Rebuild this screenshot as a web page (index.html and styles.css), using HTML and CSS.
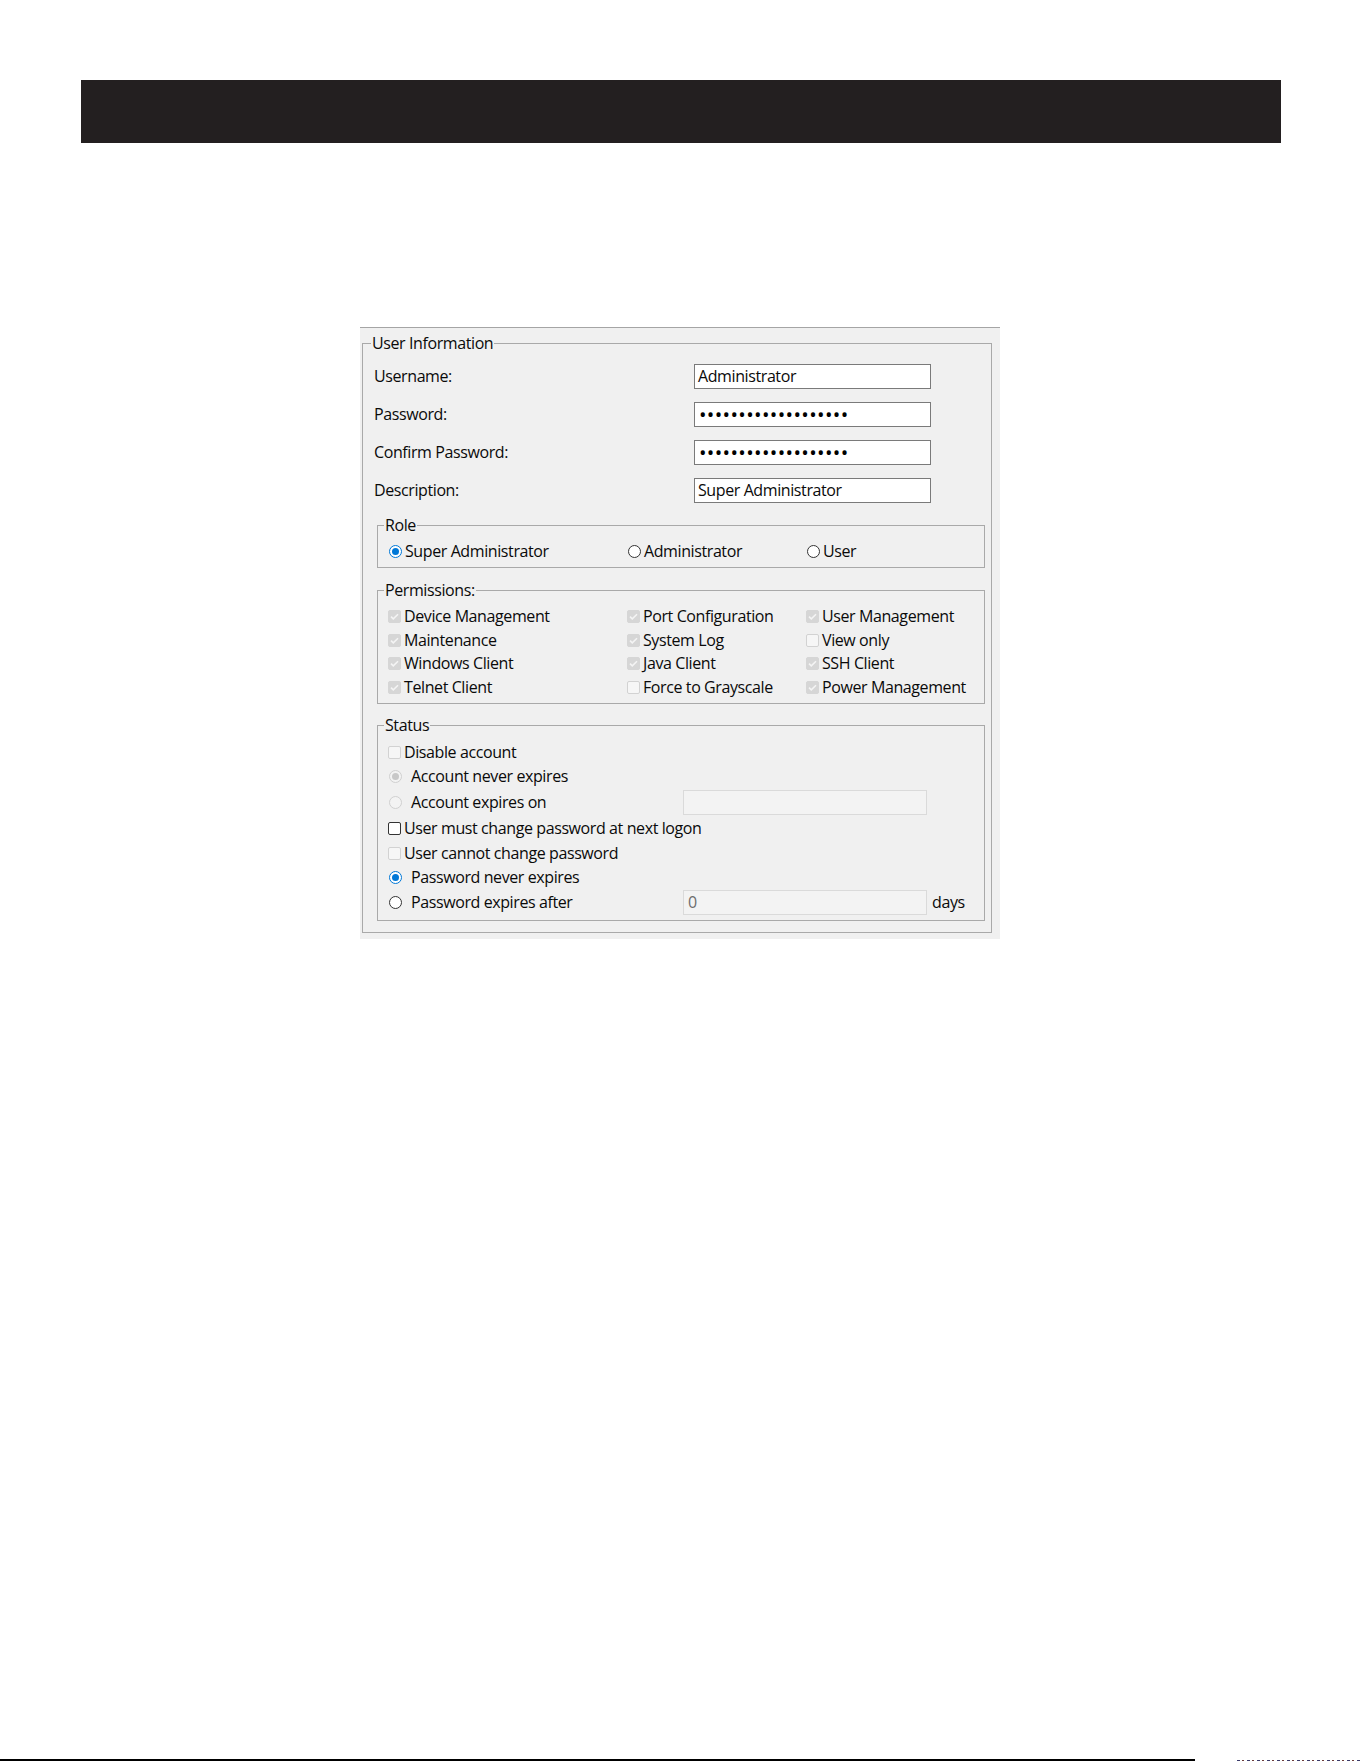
FILE: index.html
```html
<!DOCTYPE html>
<html>
<head>
  <title>User Information</title>
  <link rel="stylesheet" href="styles.css">
</head>
<body>
<div class="page">

  <div class="banner"></div>

  <div class="dialog">
    <fieldset class="group outer">
      <legend>User Information</legend>

      <div class="fields">
        <label>Username:</label>
        <div class="field">Administrator</div>
        <label>Password:</label>
        <div class="field dots">&bull;&bull;&bull;&bull;&bull;&bull;&bull;&bull;&bull;&bull;&bull;&bull;&bull;&bull;&bull;&bull;&bull;&bull;&bull;</div>
        <label>Confirm Password:</label>
        <div class="field dots">&bull;&bull;&bull;&bull;&bull;&bull;&bull;&bull;&bull;&bull;&bull;&bull;&bull;&bull;&bull;&bull;&bull;&bull;&bull;</div>
        <label>Description:</label>
        <div class="field">Super Administrator</div>
      </div>

      <fieldset class="group inner role">
        <legend>Role</legend>
        <div class="cols">
          <span class="opt"><span class="rb sel"></span>Super Administrator</span>
          <span class="opt"><span class="rb"></span>Administrator</span>
          <span class="opt"><span class="rb"></span>User</span>
        </div>
      </fieldset>

      <fieldset class="group inner perms">
        <legend>Permissions:</legend>
        <div class="cols">
          <span class="opt"><span class="cb done"><svg viewBox="0 0 11 11"><path d="M2 5.6l2.3 2.3L9 3.2"/></svg></span>Device Management</span>
          <span class="opt"><span class="cb done"><svg viewBox="0 0 11 11"><path d="M2 5.6l2.3 2.3L9 3.2"/></svg></span>Port Configuration</span>
          <span class="opt"><span class="cb done"><svg viewBox="0 0 11 11"><path d="M2 5.6l2.3 2.3L9 3.2"/></svg></span>User Management</span>
          <span class="opt"><span class="cb done"><svg viewBox="0 0 11 11"><path d="M2 5.6l2.3 2.3L9 3.2"/></svg></span>Maintenance</span>
          <span class="opt"><span class="cb done"><svg viewBox="0 0 11 11"><path d="M2 5.6l2.3 2.3L9 3.2"/></svg></span>System Log</span>
          <span class="opt"><span class="cb off"></span>View only</span>
          <span class="opt"><span class="cb done"><svg viewBox="0 0 11 11"><path d="M2 5.6l2.3 2.3L9 3.2"/></svg></span>Windows Client</span>
          <span class="opt"><span class="cb done"><svg viewBox="0 0 11 11"><path d="M2 5.6l2.3 2.3L9 3.2"/></svg></span>Java Client</span>
          <span class="opt"><span class="cb done"><svg viewBox="0 0 11 11"><path d="M2 5.6l2.3 2.3L9 3.2"/></svg></span>SSH Client</span>
          <span class="opt"><span class="cb done"><svg viewBox="0 0 11 11"><path d="M2 5.6l2.3 2.3L9 3.2"/></svg></span>Telnet Client</span>
          <span class="opt"><span class="cb off"></span>Force to Grayscale</span>
          <span class="opt"><span class="cb done"><svg viewBox="0 0 11 11"><path d="M2 5.6l2.3 2.3L9 3.2"/></svg></span>Power Management</span>
        </div>
      </fieldset>

      <fieldset class="group inner status">
        <legend>Status</legend>
        <div class="srow"><span class="opt"><span class="cb off"></span>Disable account</span></div>
        <div class="srow"><span class="opt"><span class="rb off sel wide"></span>Account never expires</span></div>
        <div class="srow input-row">
          <span class="opt lead"><span class="rb off wide"></span>Account expires on</span>
          <div class="field blank"></div>
        </div>
        <div class="srow mid"><span class="opt"><span class="cb"></span>User must change password at next logon</span></div>
        <div class="srow"><span class="opt"><span class="cb off"></span>User cannot change password</span></div>
        <div class="srow"><span class="opt"><span class="rb sel wide"></span>Password never expires</span></div>
        <div class="srow last">
          <span class="opt lead"><span class="rb wide"></span>Password expires after</span>
          <div class="field blank">0</div>
          <span class="unit">days</span>
        </div>
      </fieldset>
    </fieldset>
  </div>

  <div class="footer-rule"><span class="noise"></span></div>

</div>
</body>
</html>
```

FILE: styles.css
```css
* {
  box-sizing: border-box;
}
body {
  margin: 0;
  background: #fff;
  font-family: "Open Sans", "Noto Sans", sans-serif;
  font-size: 16px;
  letter-spacing: -0.4px;
  line-height: 21px;
  color: #0a0a0a;
}
.page {
  height: 1761px;
  display: flex;
  flex-direction: column;
  overflow: hidden;
}
.banner {
  height: 63px;
  margin: 80px 80px 0 81px;
  background: #231f20;
}

/* dialog */
.dialog {
  width: 640px;
  height: 612px;
  margin: 184px 0 0 360px;
  padding: 5px 8px 0 2px;
  background: #f0f0f0;
  border-top: 1px solid #a5a5a5;
}
.group {
  margin: 0;
  min-width: 0;
  border: 1px solid #a9a9a9;
}
.group legend {
  padding: 0 1px;
  margin-left: -4px;
}
.outer {
  padding: 10px 6px 11px 11px;
}
.outer > legend {
  margin-left: -3px;
}
.inner {
  margin: 12px 0 0 3px;
  padding: 4px 0 4px 10px;
}
.status {
  margin-top: 11px;
}

.fields {
  display: grid;
  grid-template-columns: 320px 237px;
  grid-auto-rows: 25px;
  row-gap: 13px;
  align-items: center;
}
.field {
  height: 25px;
  border: 1px solid #7a7a7a;
  background: #fff;
  padding: 0 3px;
  line-height: 23px;
  white-space: nowrap;
}
.field.dots {
  font-size: 20px;
  letter-spacing: 0.35px;
  color: #000;
  padding-left: 4px;
}
.field.blank {
  width: 244px;
  background: #f3f3f3;
  border-color: #dadada;
  color: #6d6d6d;
  padding-left: 4px;
}

.cols {
  display: grid;
  grid-template-columns: 239px 179px 1fr;
  grid-auto-rows: 23.5px;
  align-items: center;
}
.role .cols {
  grid-auto-rows: 23px;
}
.opt {
  display: flex;
  align-items: center;
  white-space: nowrap;
}

/* check boxes */
.cb {
  flex: none;
  width: 13px;
  height: 13px;
  margin-right: 3px;
  border: 1px solid #333;
  border-radius: 2px;
  background: #fff;
}
.cb svg {
  display: block;
  width: 11px;
  height: 11px;
  fill: none;
  stroke: #f4f4f4;
  stroke-width: 1.6;
}
.cb.done {
  background: #d6d6d6;
  border-color: #d6d6d6;
}
.cb.off {
  background: #f6f6f6;
  border-color: #d2d2d2;
}

/* radio buttons */
.rb {
  flex: none;
  position: relative;
  width: 13px;
  height: 13px;
  margin: 0 3px 0 1px;
  border: 1px solid #333;
  border-radius: 50%;
  background: #fff;
}
.rb.wide {
  margin-right: 9px;
}
.rb.sel {
  border-color: #0078d7;
}
.rb.sel::after {
  content: "";
  position: absolute;
  left: 2px;
  top: 2px;
  width: 7px;
  height: 7px;
  border-radius: 50%;
  background: #0078d7;
}
.rb.off {
  border-color: #d0d0d0;
  background: #f3f3f3;
}
.rb.off.sel::after {
  background: #c8c8c8;
}

/* status rows */
.srow {
  display: flex;
  align-items: center;
  height: 24px;
}
.srow.input-row {
  height: 28px;
}
.srow.mid {
  height: 25px;
}
.srow.last {
  height: 27px;
}
.opt.lead {
  width: 295px;
}
.unit {
  margin-left: 5px;
}

.footer-rule {
  margin-top: auto;
  height: 2px;
  width: 1195px;
  background: #000;
  position: relative;
}
.noise {
  position: absolute;
  left: 1237px;
  top: 1px;
  width: 124px;
  height: 1px;
  background: repeating-linear-gradient(90deg, #3b3b6b 0 3px, transparent 3px 5px, #6b3b3b 5px 7px, transparent 7px 10px);
}
```
